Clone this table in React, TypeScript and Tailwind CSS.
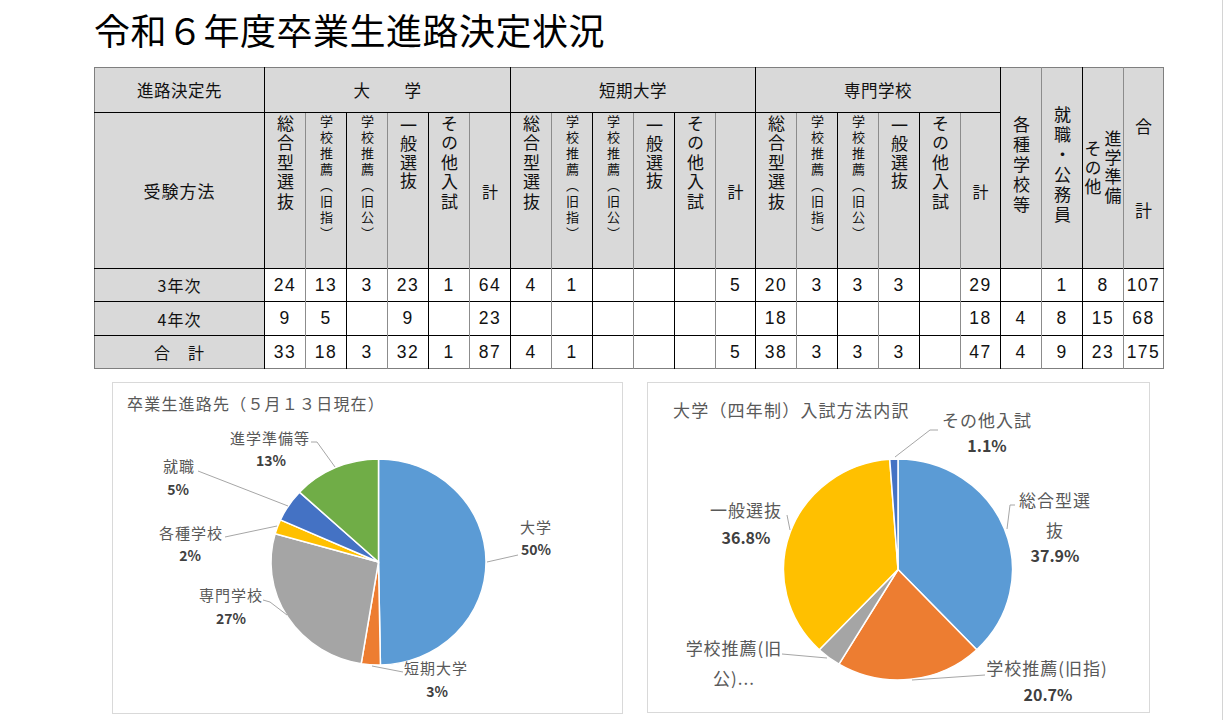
import React from "react";

type Cell = number | "";

type Slice = { v: number; c: string };
type Label = { x: number; y: number; t: string; b?: boolean };

const colWidths = [170, 41, 41, 41, 41, 41, 41, 41, 41, 41, 41, 41, 40, 41, 41, 41, 41, 41, 40, 41, 41, 41, 40];

const groups = ["大　　学", "短期大学", "専門学校"];

const subCols = [
  { t: "総合型選抜", k: "big" },
  { t: "学校推薦（旧指）", k: "small" },
  { t: "学校推薦（旧公）", k: "small" },
  { t: "一般選抜", k: "mid" },
  { t: "その他入試", k: "big" },
  { t: "計", k: "total" },
];

const rows: { label: string; v: Cell[] }[] = [
  { label: "3年次", v: [24, 13, 3, 23, 1, 64, 4, 1, "", "", "", 5, 20, 3, 3, 3, "", 29, "", 1, 8, 107] },
  { label: "4年次", v: [9, 5, "", 9, "", 23, "", "", "", "", "", "", 18, "", "", "", "", 18, 4, 8, 15, 68] },
  { label: "合　計", v: [33, 18, 3, 32, 1, 87, 4, 1, "", "", "", 5, 38, 3, 3, 3, "", 47, 4, 9, 23, 175] },
];

// 列の左線: 偶数列は黒、奇数列はグレー
function lineCls(i: number) {
  return i % 2 === 0 ? "border-l border-l-black" : "border-l border-l-[#8c8c8c]";
}

function VText({ t, k }: { t: string; k: string }) {
  if (k === "small")
    return (
      <div className="inline-block [writing-mode:vertical-rl] text-[13px] leading-[16px] tracking-[3px]">{t}</div>
    );
  if (k === "mid")
    return (
      <div className="inline-block [writing-mode:vertical-rl] text-[17px] leading-[20px] tracking-[1.5px] pt-[2px]">{t}</div>
    );
  return <div className="inline-block [writing-mode:vertical-rl] text-[17px] leading-[20px] tracking-[2.5px]">{t}</div>;
}

function pt(cx: number, cy: number, rx: number, ry: number, a: number) {
  const r = a * Math.PI * 2;
  return [cx + rx * Math.sin(r), cy - ry * Math.cos(r)];
}

function slicePath(cx: number, cy: number, rx: number, ry: number, a0: number, a1: number) {
  const [x0, y0] = pt(cx, cy, rx, ry, a0);
  const [x1, y1] = pt(cx, cy, rx, ry, a1);
  const large = a1 - a0 > 0.5 ? 1 : 0;
  return `M ${cx} ${cy} L ${x0} ${y0} A ${rx} ${ry} 0 ${large} 1 ${x1} ${y1} Z`;
}

function Pie({
  w,
  h,
  title,
  tx,
  ty,
  ts,
  cx,
  cy,
  rx,
  ry,
  data,
  labels,
  lines,
  ls,
  ps,
}: {
  w: number;
  h: number;
  title: string;
  tx: number;
  ty: number;
  ts: number;
  cx: number;
  cy: number;
  rx: number;
  ry: number;
  data: Slice[];
  labels: Label[];
  lines: string[];
  ls: number;
  ps: number;
}) {
  const total = data.reduce((s, d) => s + d.v, 0);
  let acc = 0;
  return (
    <div className="border border-[#d9d9d9] bg-white" style={{ width: w, height: h }}>
      <svg width={w - 2} height={h - 2} className="block">
        <text x={tx} y={ty} fontSize={ts} fill="#595959" letterSpacing={1.2} dominantBaseline="central">
          {title}
        </text>
        {data.map((d, i) => {
          const a0 = acc / total;
          acc += d.v;
          const a1 = acc / total;
          return <path key={i} d={slicePath(cx, cy, rx, ry, a0, a1)} fill={d.c} stroke="#fff" strokeWidth={1.5} />;
        })}
        {lines.map((p, i) => (
          <polyline key={i} points={p} fill="none" stroke="#a6a6a6" strokeWidth={1} />
        ))}
        {labels.map((l, i) => (
          <text
            key={i}
            x={l.x}
            y={l.y}
            textAnchor="middle"
            dominantBaseline="central"
            fontSize={l.b ? ps : ls}
            fontWeight={l.b ? 700 : 400}
            fill={l.b ? "#404040" : "#595959"}
            letterSpacing={l.b ? 0 : 1}
          >
            {l.t}
          </text>
        ))}
      </svg>
    </div>
  );
}

const pie1: Slice[] = [
  { v: 87, c: "#5b9bd5" },
  { v: 5, c: "#ed7d31" },
  { v: 47, c: "#a5a5a5" },
  { v: 4, c: "#ffc000" },
  { v: 9, c: "#4472c4" },
  { v: 23, c: "#70ad47" },
];

const pie1Labels: Label[] = [
  { x: 157, y: 54, t: "進学準備等" },
  { x: 158, y: 77, t: "13%", b: true },
  { x: 66, y: 82, t: "就職" },
  { x: 65, y: 106, t: "5%", b: true },
  { x: 78, y: 149, t: "各種学校" },
  { x: 77, y: 172, t: "2%", b: true },
  { x: 118, y: 211, t: "専門学校" },
  { x: 118, y: 235, t: "27%", b: true },
  { x: 423, y: 143, t: "大学" },
  { x: 423, y: 166, t: "50%", b: true },
  { x: 323, y: 284, t: "短期大学" },
  { x: 324, y: 308, t: "3%", b: true },
];

const pie1Lines = [
  "198,59 204,59 222,84",
  "85,88 175,123",
  "112,154 164,143",
  "150,217 157,219 174,232",
  "405,172 374,179",
  "290,289 259,283",
];

const pie2: Slice[] = [
  { v: 33, c: "#5b9bd5" },
  { v: 18, c: "#ed7d31" },
  { v: 3, c: "#a5a5a5" },
  { v: 32, c: "#ffc000" },
  { v: 1, c: "#4472c4" },
];

const pie2Labels: Label[] = [
  { x: 339, y: 36, t: "その他入試" },
  { x: 339, y: 62, t: "1.1%", b: true },
  { x: 407, y: 116, t: "総合型選" },
  { x: 407, y: 146, t: "抜" },
  { x: 407, y: 172, t: "37.9%", b: true },
  { x: 98, y: 126, t: "一般選抜" },
  { x: 98, y: 154, t: "36.8%", b: true },
  { x: 86, y: 264, t: "学校推薦(旧" },
  { x: 86, y: 294, t: "公)..." },
  { x: 399, y: 284, t: "学校推薦(旧指)" },
  { x: 400, y: 311, t: "20.7%", b: true },
];

const pie2Lines = [
  "290,47 282,47 247,74",
  "367,122 362,122 359,146",
  "139,132 142,147",
  "134,271 179,275",
  "337,292 264,297",
];

export default function App() {
  return (
    <div className="w-[1223px] h-[720px] overflow-hidden bg-white border-r border-[#d4d4d4] text-[#111] font-['Noto_Sans_CJK_JP','Noto_Sans',sans-serif]">
      <div className="pl-[94px]">
        <h1 className="pt-[11px] text-[36px] leading-[36px] tracking-[0.5px] font-normal text-black">
          令和６年度卒業生進路決定状況
        </h1>

        {/* 表 */}
        <table className="mt-[20px] table-fixed border-collapse border border-[#7f7f7f]">
          <colgroup>
            {colWidths.map((w, i) => (
              <col key={i} style={{ width: w }} />
            ))}
          </colgroup>
          <tbody>
            <tr className="h-[45px] bg-[#d9d9d9]">
              <td className="text-center text-[16.5px] tracking-[0.5px]">進路決定先</td>
              {groups.map((g) => (
                <td key={g} colSpan={6} className="border-l border-l-black text-center text-[16.5px] tracking-[0.5px]">
                  {g}
                </td>
              ))}
              <td rowSpan={2} className={`${lineCls(18)} text-center align-middle`}>
                <div className="inline-block [writing-mode:vertical-rl] text-[17px] leading-[20px] tracking-[3px]">
                  各種学校等
                </div>
              </td>
              <td rowSpan={2} className={`${lineCls(19)} text-center align-middle`}>
                <div className="inline-block [writing-mode:vertical-rl] text-[17px] leading-[20px] tracking-[3px]">
                  就職・公務員
                </div>
              </td>
              <td rowSpan={2} className={`${lineCls(20)} align-middle`}>
                <div className="flex flex-row-reverse items-center justify-center gap-[1px]">
                  <div className="[writing-mode:vertical-rl] text-[17px] leading-[19px] tracking-[2px]">進学準備</div>
                  <div className="[writing-mode:vertical-rl] text-[17px] leading-[19px] tracking-[2px]">その他</div>
                </div>
              </td>
              <td rowSpan={2} className={`${lineCls(21)} align-middle`}>
                <div className="flex flex-col items-center gap-[64px] text-[17px] leading-[20px]">
                  <span>合</span>
                  <span>計</span>
                </div>
              </td>
            </tr>
            <tr className="h-[156px] bg-[#d9d9d9]">
              <td className="border-t border-t-black text-center text-[17px] tracking-[1px]">受験方法</td>
              {[0, 1, 2].map((g) =>
                subCols.map((s, j) => {
                  const i = g * 6 + j;
                  return (
                    <td
                      key={i}
                      className={`${lineCls(i)} border-t border-t-black text-center ${
                        s.k === "total" ? "align-middle" : "align-top pt-[2px]"
                      }`}
                    >
                      {s.k === "total" ? <span className="text-[16px]">計</span> : <VText t={s.t} k={s.k} />}
                    </td>
                  );
                })
              )}
            </tr>
            {rows.map((r, ri) => (
              <tr key={r.label} className={ri === 1 ? "h-[34px]" : "h-[33px]"}>
                <td className="border-t border-t-black bg-[#d9d9d9] text-center text-[16px] tracking-[1px]">{r.label}</td>
                {r.v.map((v, i) => (
                  <td
                    key={i}
                    className={`${lineCls(i)} border-t border-t-black bg-white text-center text-[17.5px] tracking-[1.5px] font-['Liberation_Sans',sans-serif] whitespace-nowrap`}
                  >
                    {v}
                  </td>
                ))}
              </tr>
            ))}
          </tbody>
        </table>

        {/* グラフ */}
        <div className="mt-[13px] ml-[18px] flex gap-[24px]">
          <Pie
            w={511}
            h={332}
            title="卒業生進路先（５月１３日現在）"
            tx={14}
            ty={20}
            ts={16}
            cx={265.5}
            cy={179}
            rx={107.5}
            ry={103}
            data={pie1}
            labels={pie1Labels}
            lines={pie1Lines}
            ls={15}
            ps={14}
          />
          <Pie
            w={503}
            h={331}
            title="大学（四年制）入試方法内訳"
            tx={25}
            ty={26}
            ts={17}
            cx={250}
            cy={186.5}
            rx={114.5}
            ry={110.5}
            data={pie2}
            labels={pie2Labels}
            lines={pie2Lines}
            ls={17}
            ps={16}
          />
        </div>
      </div>
    </div>
  );
}
